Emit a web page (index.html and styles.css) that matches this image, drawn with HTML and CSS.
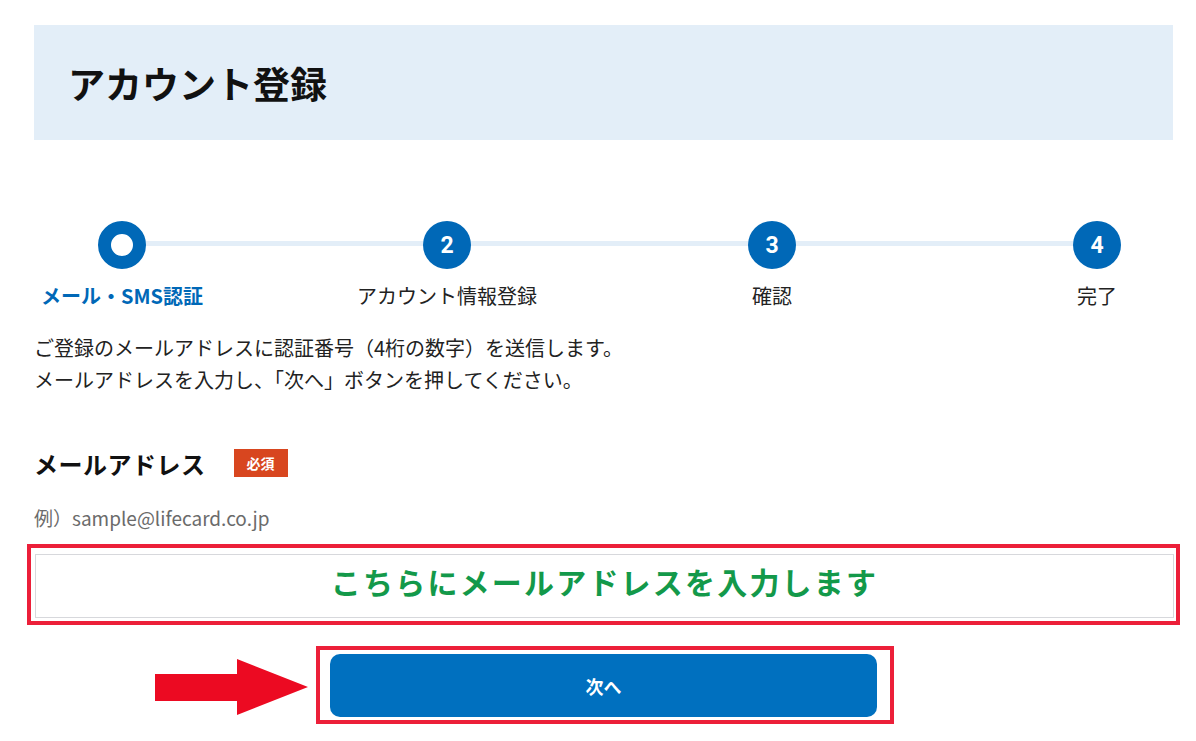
FILE: index.html
```html
<!DOCTYPE html>
<html lang="ja">
<head>
<meta charset="utf-8">
<title>アカウント登録</title>
<link rel="stylesheet" href="styles.css">
</head>
<body>
<div class="page">
  <header class="page-head">
    <h1 class="page-title">アカウント登録</h1>
  </header>

  <ol class="stepper">
    <li class="step is-current">
      <span class="step-dot"></span>
      <span class="step-label">メール・SMS認証</span>
    </li>
    <li class="step">
      <span class="step-dot">2</span>
      <span class="step-label">アカウント情報登録</span>
    </li>
    <li class="step">
      <span class="step-dot">3</span>
      <span class="step-label">確認</span>
    </li>
    <li class="step">
      <span class="step-dot">4</span>
      <span class="step-label">完了</span>
    </li>
  </ol>

  <p class="lead">ご登録のメールアドレスに認証番号（4桁の数字）を送信します。<br>メールアドレスを入力し、「次へ」ボタンを押してください。</p>

  <div class="field-head">
    <span class="field-label">メールアドレス</span>
    <span class="badge">必須</span>
  </div>
  <p class="example">例）sample@lifecard.co.jp</p>

  <div class="mark-box input-mark">
    <div class="email-input">こちらにメールアドレスを入力します</div>
  </div>

  <div class="action-row">
    <svg class="arrow" width="153" height="56" viewBox="0 0 153 56" aria-hidden="true">
      <polygon points="0,15 82,15 82,0 153,28 82,56 82,42 0,42" fill="#ec0a22"/>
    </svg>
    <div class="mark-box button-mark">
      <button class="next-btn" type="button">次へ</button>
    </div>
  </div>
</div>
</body>
</html>
```

FILE: styles.css
```css
* { box-sizing: border-box; }

html, body {
  margin: 0;
  padding: 0;
  background: #ffffff;
}

body {
  font-family: "Noto Sans CJK JP", "Noto Sans", sans-serif;
  color: #1a1a1a;
}

.page {
  width: 1173px;
  padding-left: 34px;
  padding-top: 25px;
}

.page-head {
  height: 115px;
  background: #e3eef8;
  display: flex;
  align-items: center;
  padding-left: 34px;
}

.page-title {
  margin: 0;
  font-size: 37px;
  font-weight: 700;
  line-height: 1;
  color: #111;
  padding-top: 2px;
}

/* stepper */
.stepper {
  list-style: none;
  margin: 81px -6px 0 6px;
  padding: 0;
  display: flex;
  justify-content: space-between;
  position: relative;
}

.stepper::before {
  content: "";
  position: absolute;
  left: 82px;
  right: 82px;
  top: 20px;
  height: 5px;
  background: #e3eef8;
}

.step {
  width: 164px;
  display: flex;
  flex-direction: column;
  align-items: center;
  position: relative;
}

.step-dot {
  width: 48px;
  height: 48px;
  border-radius: 50%;
  background: #0068b7;
  color: #fff;
  font-family: "Roboto", "Liberation Sans", sans-serif;
  font-weight: 700;
  font-size: 23px;
  display: flex;
  align-items: center;
  justify-content: center;
}

.is-current .step-dot {
  background: #fff;
  border: 13px solid #0068b7;
}

.step-label {
  margin-top: 13px;
  font-size: 20px;
  line-height: 28px;
  color: #222;
  white-space: nowrap;
}

.is-current .step-label {
  color: #0068b7;
  font-weight: 700;
}

/* text */
.lead {
  margin: 22px 0 0;
  font-size: 20px;
  line-height: 32px;
  color: #222;
}

.field-head {
  margin-top: 50px;
  display: flex;
  align-items: center;
  gap: 28px;
  height: 34px;
}

.field-label {
  font-size: 24px;
  font-weight: 700;
  color: #111;
  letter-spacing: 0.5px;
}

.badge {
  width: 54px;
  height: 28px;
  background: #d8461f;
  color: #fff;
  font-size: 14px;
  font-weight: 700;
  display: flex;
  align-items: center;
  justify-content: center;
}

.example {
  margin: 24px 0 0;
  font-size: 19px;
  line-height: 28px;
  color: #6b6b6b;
}

/* annotation boxes */
.mark-box {
  border: 4px solid #ec1f39;
}

.input-mark {
  margin: 12px 0 0 -7px;
  width: 1153px;
  padding: 6px 2px 3px 4px;
}

.email-input {
  height: 64px;
  padding-bottom: 10px;
  border: 1px solid #d7d8dc;
  display: flex;
  align-items: center;
  justify-content: center;
  font-size: 30px;
  font-weight: 700;
  letter-spacing: 2.2px;
  color: #13994a;
}

.action-row {
  margin: 21px 0 0 121px;
  display: flex;
  align-items: center;
  gap: 8px;
}

.arrow {
  display: block;
  margin-top: 4px;
}

.button-mark {
  width: 578px;
  height: 78px;
  padding: 4px 13px 3px 10px;
}

.next-btn {
  width: 100%;
  height: 100%;
  border: 0;
  border-radius: 10px;
  background: #0070bf;
  color: #fff;
  font-family: "Noto Sans CJK JP", sans-serif;
  font-size: 18px;
  font-weight: 700;
  cursor: pointer;
}
```
